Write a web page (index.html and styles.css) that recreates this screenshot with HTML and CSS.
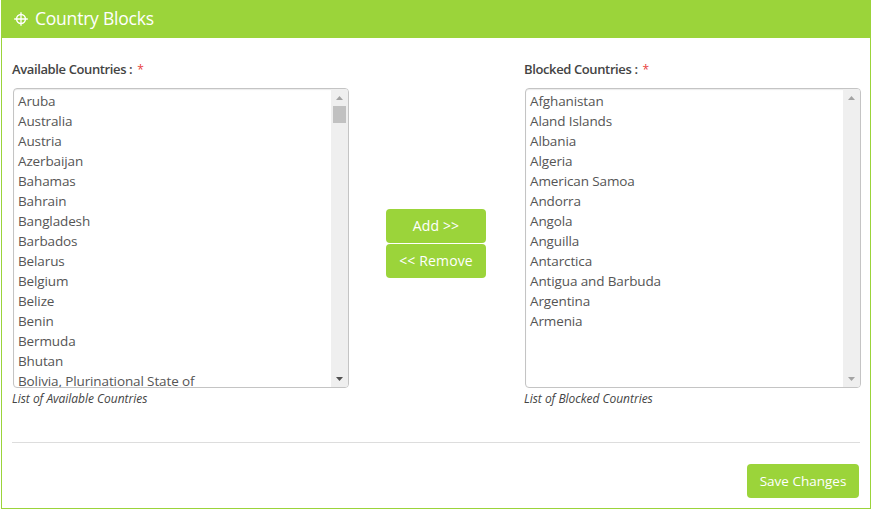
FILE: index.html
```
<!DOCTYPE html>
<html lang="en">
<head>
<meta charset="utf-8">
<title>Country Blocks</title>
<link rel="stylesheet" href="styles.css">
</head>
<body>
<section class="panel">
  <header class="panel-header">
    <svg class="target" width="14" height="14" viewBox="0 0 14 14" fill="none" stroke="#fff"><circle cx="7" cy="7" r="4.4" stroke-width="1.5"/><path d="M7 .3v13.4M.2 7h13.6" stroke-width="1.3"/></svg>
    <h1>Country Blocks</h1>
  </header>
  <div class="panel-body">
    <div class="transfer">
      <div class="column">
        <div class="label">Available Countries :<span class="required">*</span></div>
        <div class="listbox">
          <ul>
            <li>Aruba</li><li>Australia</li><li>Austria</li><li>Azerbaijan</li><li>Bahamas</li><li>Bahrain</li><li>Bangladesh</li><li>Barbados</li><li>Belarus</li><li>Belgium</li><li>Belize</li><li>Benin</li><li>Bermuda</li><li>Bhutan</li><li>Bolivia, Plurinational State of</li>
          </ul>
          <div class="scrollbar">
            <svg width="7" height="4" viewBox="0 0 7 4"><path d="M0 4L3.5 0L7 4z" fill="#a3a3a3"/></svg>
            <div class="thumb"></div>
            <svg class="down" width="7" height="4" viewBox="0 0 7 4"><path d="M0 0h7L3.5 4z" fill="#505050"/></svg>
          </div>
        </div>
        <p class="hint">List of Available Countries</p>
      </div>
      <div class="actions">
        <button type="button" class="move">Add &gt;&gt;</button>
        <button type="button" class="move">&lt;&lt; Remove</button>
      </div>
      <div class="column">
        <div class="label">Blocked Countries :<span class="required">*</span></div>
        <div class="listbox">
          <ul>
            <li>Afghanistan</li><li>Aland Islands</li><li>Albania</li><li>Algeria</li><li>American Samoa</li><li>Andorra</li><li>Angola</li><li>Anguilla</li><li>Antarctica</li><li>Antigua and Barbuda</li><li>Argentina</li><li>Armenia</li>
          </ul>
          <div class="scrollbar">
            <svg width="7" height="4" viewBox="0 0 7 4"><path d="M0 4L3.5 0L7 4z" fill="#a3a3a3"/></svg>
            <svg class="down" width="7" height="4" viewBox="0 0 7 4"><path d="M0 0h7L3.5 4z" fill="#a3a3a3"/></svg>
          </div>
        </div>
        <p class="hint">List of Blocked Countries</p>
      </div>
    </div>
    <footer><button type="button" class="save">Save Changes</button></footer>
  </div>
</section>
</body>
</html>
```
FILE: styles.css
```
* { box-sizing: border-box; }
body {
  margin: 0;
  padding: 0 1px 1px;
  height: 510px;
  overflow: hidden;
  background: #fff;
  color: #555;
  font: 13.5px/20px "Open Sans", "Noto Sans", sans-serif;
}
.panel { height: 509px; border: 1px solid #9bd43a; border-top: 0; }
.panel-header {
  display: flex;
  gap: 7px;
  height: 38px;
  padding-left: 12px;
  background: #9bd43a;
  color: #fff;
}
.target { margin-top: 12px; }
h1 { margin: 0; font-size: 17.5px; font-weight: 400; line-height: 36px; letter-spacing: -0.22px; }
.panel-body { padding: 21px 10px 0; }
.transfer { display: flex; height: 384px; border-bottom: 1px solid #ddd; }
.column { flex: none; width: 337px; }
.label {
  height: 29px;
  color: #444;
  font-size: 13px;
  font-weight: 600;
  letter-spacing: -0.38px;
}
.required { margin-left: 5px; color: #e8413d; font-size: 12px; font-weight: 400; }
.listbox {
  display: flex;
  height: 300px;
  margin-left: 1px;
  border: 1px solid #c4c4c4;
  border-radius: 4px;
  overflow: hidden;
  box-shadow: inset 0 1px 1px rgba(0, 0, 0, .08);
}
ul { flex: 1; margin: 0; padding: 2px 4px; list-style: none; overflow: hidden; letter-spacing: -0.12px; }
li { height: 20px; white-space: nowrap; }
.scrollbar {
  display: flex;
  flex-direction: column;
  align-items: center;
  width: 17px;
  padding: 7px 0 6px;
  background: #efefef;
}
.thumb { width: 13px; height: 17px; margin-top: 6px; background: #c1c1c1; }
.down { margin-top: auto; }
.hint { margin: 1px 0 0; color: #444; font-size: 12px; font-style: italic; letter-spacing: -0.03px; }
.actions { display: flex; flex: none; flex-direction: column; gap: 1px; width: 100px; margin: 150px 38px 0 37px; }
button {
  height: 34px;
  padding: 0;
  border: 0;
  border-radius: 4px;
  background: #9bd43a;
  color: #fff;
  font: inherit;
}
.move { font-size: 14px; letter-spacing: 0.15px; }
footer { display: flex; justify-content: flex-end; padding: 21px 1px 0; }
.save { width: 112px; }
```
